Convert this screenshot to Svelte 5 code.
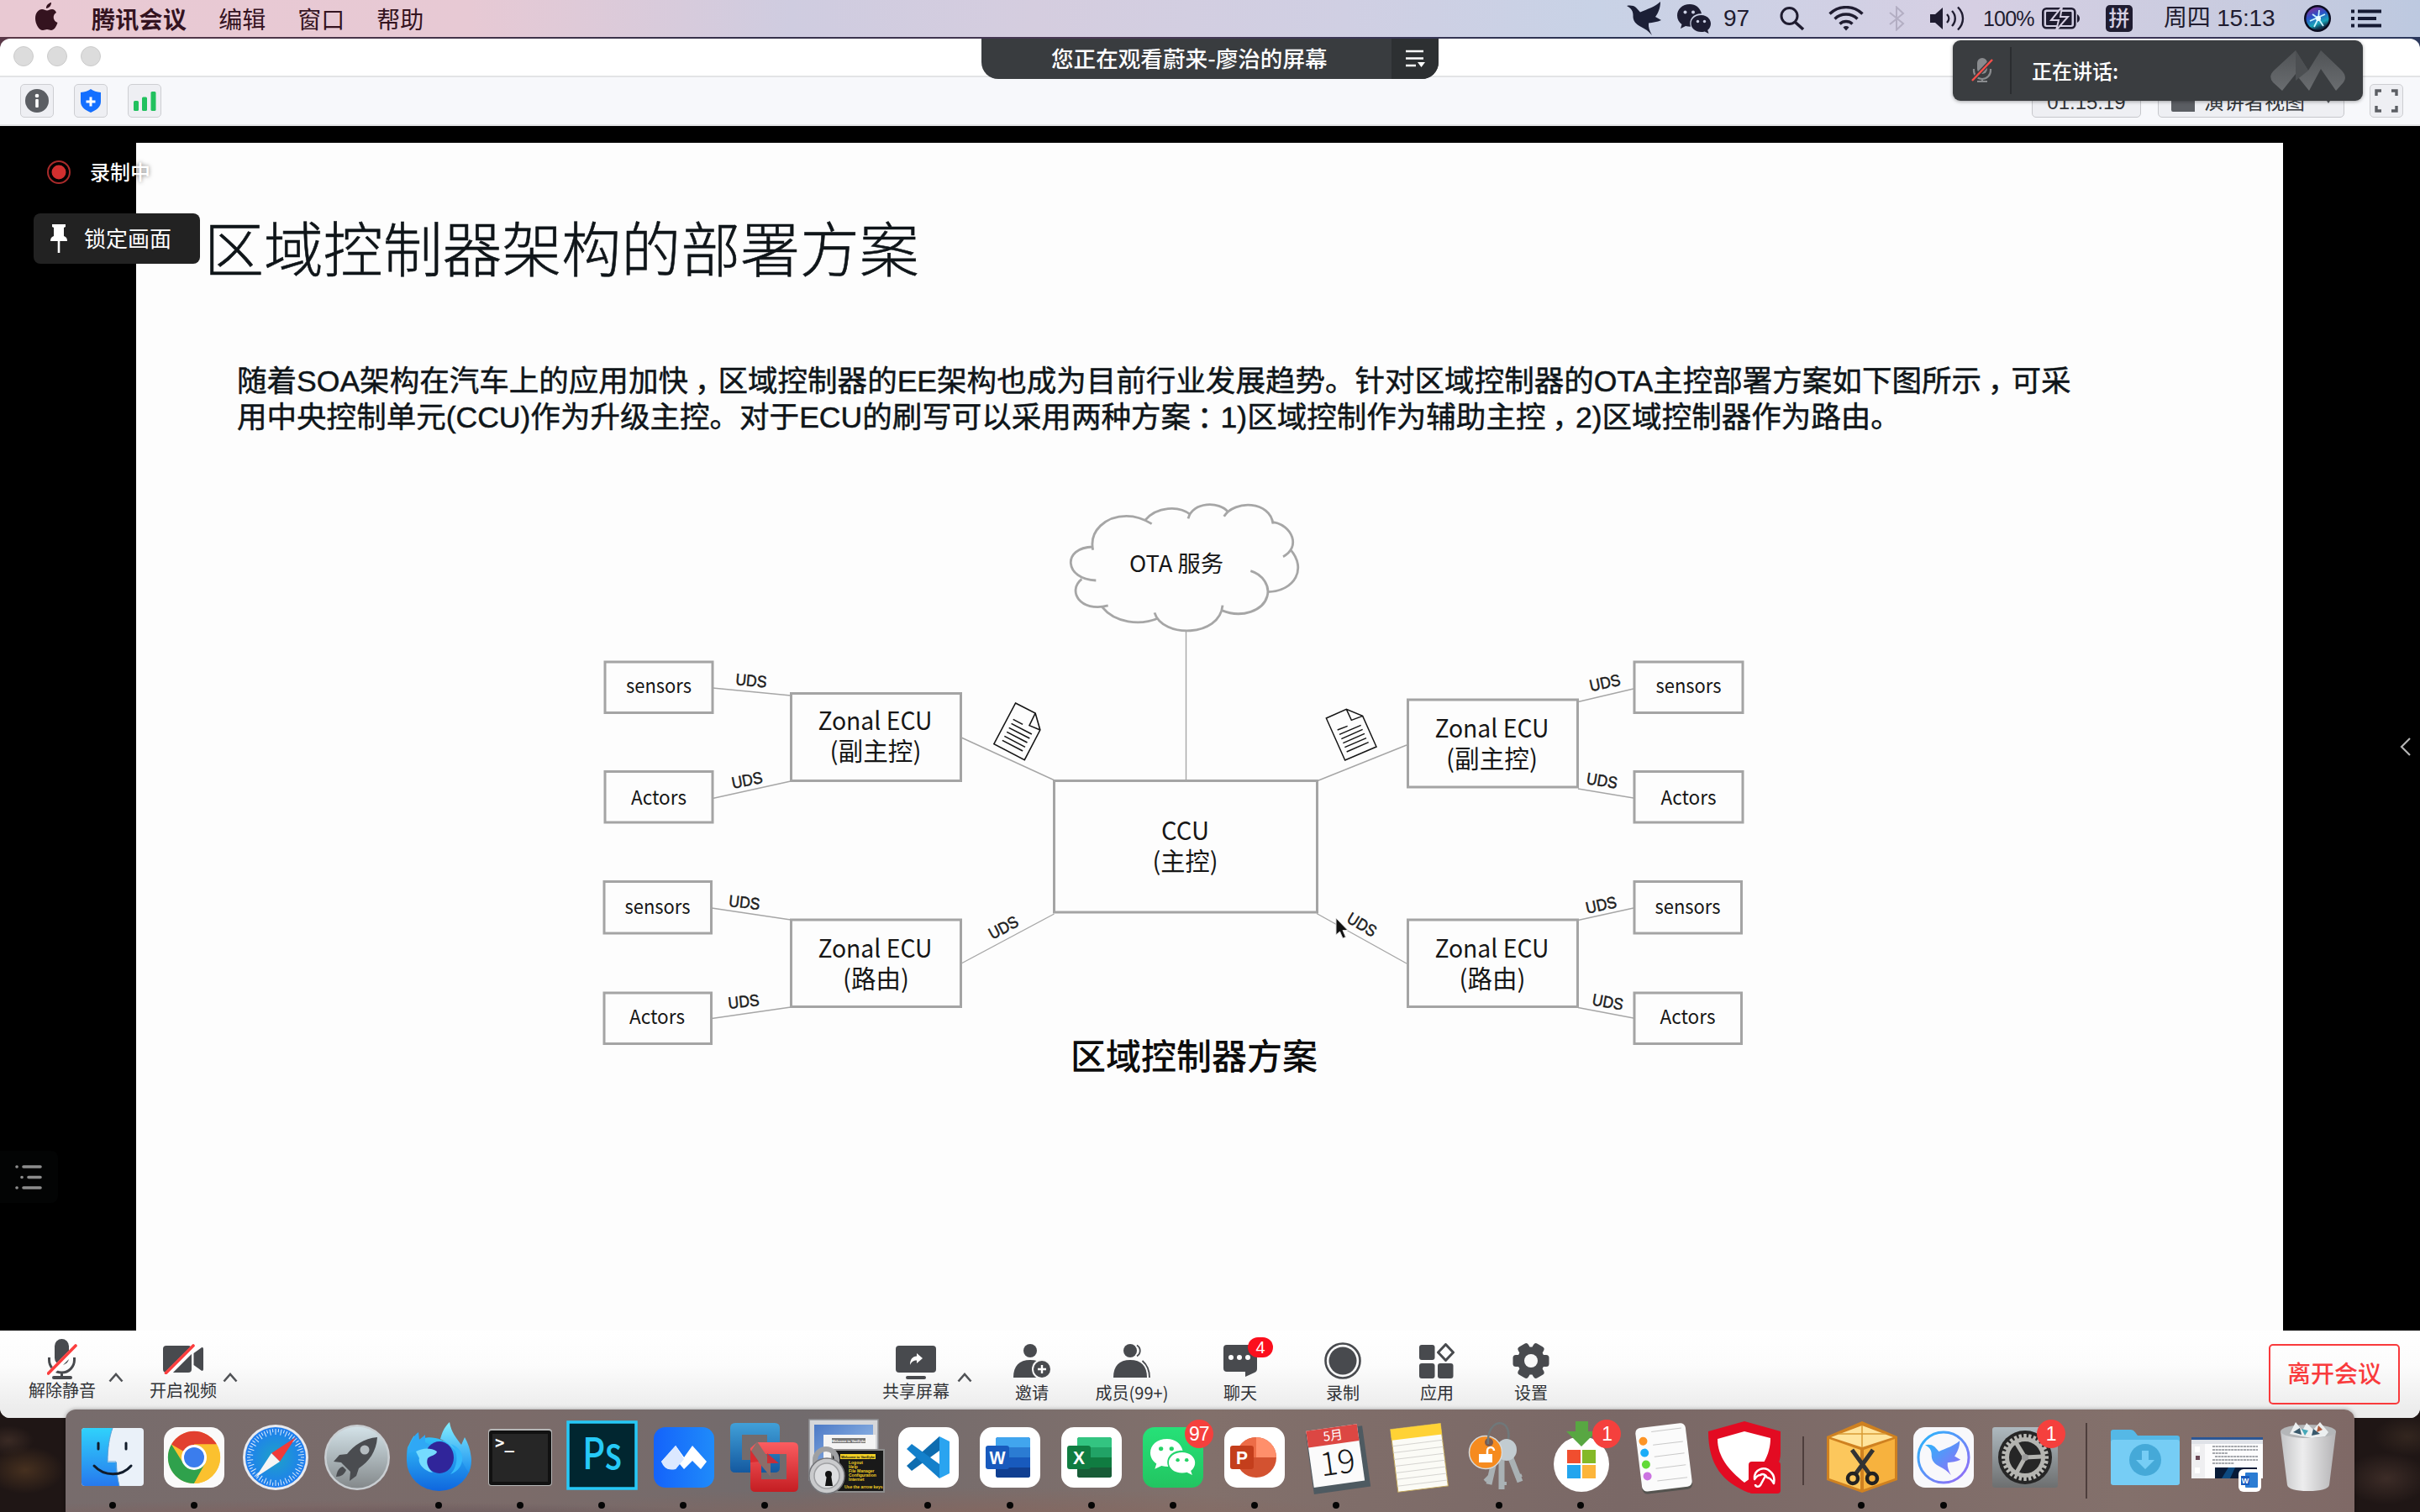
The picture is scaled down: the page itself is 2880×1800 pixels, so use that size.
<script>
  // Diagram boxes: x, y, width, height
  const boxes = [
    [1254.5, 929.5, 313, 156.5],
    [720, 788, 128, 60.5], [720, 918.5, 128, 60.5],
    [719, 1049.5, 127.5, 61.5], [719, 1182, 127.5, 60.5],
    [941.5, 825.5, 202, 104], [941.5, 1095, 202, 103.5],
    [1675.5, 833, 202, 104], [1675.5, 1095, 202, 103.5],
    [1945, 788, 129, 60.5], [1945, 918.5, 129, 60.5],
    [1945, 1049.5, 127.5, 61.5], [1945, 1182, 127.5, 60.5]
  ];

  // Connectors: x1, y1, x2, y2
  const links = [
    [1411.5, 750, 1411.5, 929],
    [848, 819, 941, 828], [848, 950.5, 941, 930],
    [847, 1081, 941, 1095], [847, 1212.5, 941, 1199],
    [1144, 878, 1254, 928.5], [1144, 1147, 1254.5, 1088],
    [1878, 835.5, 1944, 820], [1878, 939, 1944, 950],
    [1878, 1095.5, 1944, 1081], [1878, 1199.5, 1944, 1212],
    [1568, 929.5, 1674, 887], [1567, 1087.5, 1674, 1147]
  ];

  // Node labels: text, centre x, baseline, drawn width, font size
  const labels = [
    ['OTA 服务', 1400, 681, 112, 27],
    ['CCU', 1410.5, 1000, 57, 29.5], ['(主控)', 1410.5, 1036, 78, 29.5],
    ['sensors', 784, 825, 78, 23.5], ['Actors', 784, 958, 66, 23.5],
    ['sensors', 782.5, 1088, 78, 23.5], ['Actors', 782, 1219, 66, 23.5],
    ['Zonal ECU', 1041.5, 869, 136, 29.5], ['(副主控)', 1042, 905, 109, 29.5],
    ['Zonal ECU', 1041.5, 1140, 136, 29.5], ['(路由)', 1042.5, 1176, 79, 29.5],
    ['Zonal ECU', 1775.5, 878, 136, 29.5], ['(副主控)', 1775.5, 914, 109, 29.5],
    ['Zonal ECU', 1775.5, 1140, 136, 29.5], ['(路由)', 1776, 1176, 79, 29.5],
    ['sensors', 2009.5, 825, 78, 23.5], ['Actors', 2009.5, 958, 66, 23.5],
    ['sensors', 2008.5, 1088, 78, 23.5], ['Actors', 2008.5, 1219, 66, 23.5]
  ];

  // Protocol tags along the connectors: centre x, centre y, angle
  const tags = [
    [894, 810, 5], [889, 928.5, -11], [886, 1074, 6], [885, 1192, -6], [1194, 1104, -28],
    [1910, 812.5, -12], [1906.5, 929, 9], [1905.5, 1077, -12], [1913.5, 1192.5, 10], [1621, 1100.5, 31]
  ];

  const centreTools = [
    { label: '邀请', width: 130, icon: 'invite' },
    { label: '成员(99+)', width: 108, icon: 'members' },
    { label: '聊天', width: 150, icon: 'chat', badge: '4' },
    { label: '录制', width: 94, icon: 'record' },
    { label: '应用', width: 130, icon: 'apps' },
    { label: '设置', width: 94, icon: 'gear' }
  ];

  const dock = [
    { icon: 'finder', on: true }, { icon: 'chrome', on: true }, { icon: 'safari' }, { icon: 'launchpad' },
    { icon: 'firefox', on: true }, { icon: 'terminal', on: true }, { icon: 'ps', on: true },
    { icon: 'meeting', on: true }, { icon: 'vmware', on: true }, { icon: 'crt' }, { icon: 'vscode', on: true },
    { icon: 'word', on: true }, { icon: 'excel', on: true }, { icon: 'wechat', on: true, badge: '97' },
    { icon: 'ppt', on: true }, { icon: 'calendar', on: true }, { icon: 'notes' }, { icon: 'keys', on: true },
    { icon: 'windows', on: true, badge: '1' }, { icon: 'reminders' }, { icon: 'avira' },
    { icon: 'sep-short' },
    { icon: 'archive', on: true }, { icon: 'bird', on: true }, { icon: 'prefs', badge: '1' },
    { icon: 'sep-long' },
    { icon: 'folder' }, { icon: 'preview' }, { icon: 'trash' }
  ];

  const ticks = Array.from({ length: 60 }, (_, i) => i * 6);
  const teeth = Array.from({ length: 28 }, (_, i) => (i * 360) / 28);
  const lobes = [0, 60, 120, 180, 240, 300];
</script>

{#snippet wechatShape(front, back)}
  <path fill={front} fill-rule="evenodd" d="M15 0C6 0 0 6 0 13.500c0 4.500 2.200 8 5.500 10.500L4 29l6-3c2 .6 4 .8 6 .8-3-9 4-16 13-15.500C27.500 4.500 22 0 15 0z"/>
  <circle cx="9.500" cy="9.500" r="2" fill={back}/><circle cx="19" cy="9.500" r="2" fill={back}/>
  <path fill={front} d="M28.500 13C21.500 13 16.500 17.500 16.500 23s5 10 12 10c1.500 0 3-.2 4.200-.6l4.800 2.600-1.300-4.200C38.800 28.900 40 26 40 23c0-5.500-5-10-11.500-10z"/>
  <circle cx="24.500" cy="20.500" r="1.700" fill={back}/><circle cx="32.500" cy="20.500" r="1.700" fill={back}/>
{/snippet}

{#snippet birdShape(fill)}
  <path {fill} d="M0 5c4-1 8-.5 11 2l5 5.500C24 9 34 6 40 0c0 8-3 14-6 18l7 4c-5 2.500-10 2.500-15 3.500-.5 5 1 9 4 14.500-4-5-8-7.500-13-10C11 27 7 23 7.500 16 7.500 12 6 8 0 5z"/>
{/snippet}

{#snippet person(extra)}
  <circle cx="20" cy="8" r="8" fill="#484a4e"/>
  <path d="M0 40c0-14 7-21 20-21s20 7 20 21z" fill="#484a4e"/>
  {#if extra}
    <circle cx="34" cy="30" r="12" fill="#f7f7f7"/><circle cx="34" cy="30" r="10" fill="#484a4e"/>
    <path d="M34 25v10M29 30h10" stroke="#fff" stroke-width="2.400"/>
  {:else}
    <path d="M27 1c5 3 5 11 0 14M34 20c6 4 9 11 9.500 20" fill="none" stroke="#fbfbfb" stroke-width="4"/>
    <path d="M28 1.500c5 3 5 10 0 13M34.500 20c6 5 8.500 11 8.500 20" fill="none" stroke="#484a4e" stroke-width="1.800"/>
  {/if}
{/snippet}

{#snippet toolIcon(name)}
  {#if name === 'mic'}
    <svg width="36" height="48" viewBox="0 0 36 48">
      <rect x="9" y="0" width="17" height="31" rx="8.500" fill="#484a4e"/>
      <path d="M2.500 22v3a15 15 0 0 0 30 0v-3M17.500 40v5" fill="none" stroke="#484a4e" stroke-width="3"/>
      <rect x="6" y="44" width="24" height="4" rx="2" fill="#484a4e"/>
      <path d="M3 42L36 9" stroke="#fff" stroke-width="7"/><path d="M1.500 41L34 8" stroke="#fb3e3e" stroke-width="3.600" stroke-linecap="round"/>
    </svg>
  {:else if name === 'video'}
    <svg class="video" width="48" height="36" viewBox="0 0 48 36">
      <rect x="0" y="2" width="34" height="32" rx="4" fill="#484a4e"/>
      <path d="M36.500 11l9-6.500c1.500-1 2.500 0 2.500 1.500v24c0 1.500-1 2.500-2.500 1.500l-9-6.500z" fill="#484a4e"/>
      <path d="M5 36L38 3" stroke="#fff" stroke-width="7"/><path d="M3.500 34.500L36 2" stroke="#fb3e3e" stroke-width="3.600" stroke-linecap="round"/>
    </svg>
  {:else if name === 'share'}
    <svg width="48" height="40" viewBox="0 0 48 40">
      <rect width="48" height="32" rx="4" fill="#484a4e"/><rect x="12" y="36" width="24" height="4" rx="2" fill="#484a4e"/>
      <path d="M17 23c0-7 3-10 8-10.500V9l7 6-7 6v-3.500c-4 0-6 1.500-8 5.500z" fill="#fff"/>
    </svg>
  {:else if name === 'invite'}
    <svg width="44" height="40" viewBox="0 0 44 40">{@render person(true)}</svg>
  {:else if name === 'members'}
    <svg width="44" height="40" viewBox="0 0 44 40">{@render person(false)}</svg>
  {:else if name === 'chat'}
    <svg width="40" height="38" viewBox="0 0 40 38">
      <path d="M4 0h32a4 4 0 0 1 4 4v24c0 3-1 4-3 5l-11 5v-6H4a4 4 0 0 1-4-4V4a4 4 0 0 1 4-4z" fill="#484a4e"/>
      <circle cx="9" cy="15" r="3" fill="#fff"/><circle cx="19" cy="15" r="3" fill="#fff"/><circle cx="29" cy="15" r="3" fill="#fff"/>
    </svg>
  {:else if name === 'record'}
    <svg width="44" height="44" viewBox="0 0 44 44"><circle cx="22" cy="22" r="20.500" fill="none" stroke="#484a4e" stroke-width="2.600"/><circle cx="22" cy="22" r="16.500" fill="#484a4e"/></svg>
  {:else if name === 'apps'}
    <svg width="42" height="42" viewBox="0 0 42 42" fill="#484a4e">
      <rect y="2" width="18.500" height="18" rx="3"/><rect y="24" width="18.500" height="18" rx="3"/><rect x="22" y="24" width="18.500" height="18" rx="3"/>
      <path d="M31.500 1.500l9 9.500-9 9.500-9-9.500z" fill="none" stroke="#484a4e" stroke-width="3" stroke-linejoin="round"/>
    </svg>
  {:else}
    <svg width="44" height="44" viewBox="-22 -22 44 44" fill="#484a4e">
      {#each lobes as a}<rect x="-7" y="-21.500" width="14" height="20" rx="3.500" transform="rotate({a + 30})"/>{/each}
      <circle r="16.500"/><circle r="8" fill="#f8f8f8"/>
    </svg>
  {/if}
{/snippet}

{#snippet chevron()}
  <svg class="chev" width="18" height="12" viewBox="0 0 18 12"><path d="M1.500 10.500L9 2l7.500 8.500" fill="none" stroke="#505256" stroke-width="2.600"/></svg>
{/snippet}

{#snippet office(color, dark, mid, light, letter, round)}
  <rect x="-36" y="-36" width="72" height="72" rx="15" fill="#fff"/>
  {#if round}
    <circle cx="2" cy="0" r="24" fill="#d35230"/><path d="M2-24A24 24 0 0 1 26 0H2z" fill="#ff8f6b"/><path d="M2-24A24 24 0 0 0-22 0H2z" fill="#ed6c47"/>
  {:else}
    <rect x="-17" y="-24" width="41" height="48" rx="3" fill={color}/>
    <path d="M-17-12v-9a3 3 0 0 1 3-3h35a3 3 0 0 1 3 3v9z" fill={light}/><rect x="-17" y="-12" width="41" height="12" fill={mid}/>
    <path d="M-17 12h41v9a3 3 0 0 1-3 3h-35a3 3 0 0 1-3-3z" fill={dark}/>
  {/if}
  <rect x="-29" y="-14" width="28" height="28" rx="3" fill={color}/>
  <text x="-15" y="8" text-anchor="middle" class="latin" font-size="22" font-weight="700" textLength={letter === 'W' ? 19 : 14} lengthAdjust="spacingAndGlyphs" fill="#fff">{letter}</text>
{/snippet}

{#snippet dockIcon(name)}
  <svg class="app" width="96" height="96" viewBox="-48 -48 96 96">
    {#if name === 'finder'}
      <rect x="-37" y="-35" width="74" height="69" rx="4" fill="#eaf1f9"/>
      <path d="M0-35h-33a4 4 0 0 0-4 4v61a4 4 0 0 0 4 4H8C6 24 5 15 5 6H-6C-6-10-4-24 0-35z" fill="url(#g-finder)"/>
      <path d="M0-35C-4-24-6-10-6 5H4c0 12 2 21 4 29" fill="none" stroke="#5aa0d6" stroke-width="1"/>
      <path d="M-17-17v7M16-17v7M-22 10C-10 23 11 23 22 10" fill="none" stroke="#111c2b" stroke-width="3" stroke-linecap="round"/>
    {:else if name === 'chrome'}
      <rect x="-36" y="-36" width="72" height="72" rx="16" fill="#fafafa"/>
      <circle r="31" fill="#fbc12f"/>
      <path d="M0 0L-27-15.500A31 31 0 0 1 27-15.500H0z" fill="#e2402f"/><path d="M-27-15.500A31 31 0 0 0 0 31L13 7-13 7z" fill="#2fa14c"/>
      <path d="M0-15.500h27A31 31 0 0 1 0 31l13.500-23z" fill="#fbc12f"/>
      <circle r="15" fill="#fff"/><circle r="12" fill="#3b7ded"/>
    {:else if name === 'safari'}
      <circle r="39" fill="#e9eaee"/><circle r="36" fill="url(#g-safari)"/>
      {#each ticks as t}<path d="M0-34v{t % 12 ? 4 : 7}" stroke="#fff" stroke-width="1" opacity=".85" transform="rotate({t})"/>{/each}
      <path d="M24-24L5 5-5-5z" fill="#f03a3a"/><path d="M-24 24L5 5-5-5z" fill="#f5f5f5"/>
    {:else if name === 'launchpad'}
      <circle r="39" fill="#c9ced2"/><circle r="36.500" fill="url(#g-launch)"/>
      <path d="M24-24C8-23-4-14-12-4l-9 1-7 8 9 1 11 11-1 11 8-6 3-9C14 5 23-7 24-24z" fill="#4a4c50"/><circle cx="9" cy="-9" r="5.500" fill="#b5bcc0"/>
      <path d="M-17 11c-5 1-7 6-8 12 6 0 10-3 12-8" fill="#4a4c50"/>
    {:else if name === 'firefox'}
      <path d="M-37-12c3-5 4-9 8-14l2 7c9-6 20-6 30-2C10-17 39-20 39 4a38.500 36 0 0 1-77 0c0-6 0-11 1-16z" fill="url(#g-fox)"/>
      <path d="M2-22c3-11 6-15 11-20 2 12 8 19 14 27l4-9c8 14 10 29 5 42C28 8 26-4 20-8 14-14 8-20 2-22z" fill="url(#g-fox2)"/>
      <path d="M-36-5c1-10 5-20 12-25l1 9 7-6 0 9 8 4z" fill="#2fa8f5"/>
      <ellipse cx="1" cy="0" rx="17" ry="19" fill="#30259a"/><path d="M14-16c10 8 10 26 0 36 18-6 20-30 0-36z" fill="#35b8fb"/>
      <path d="M-27-7c8-4 17-5 25 0 0 4-8 5-11 8-2 5 0 12 6 17-12-2-18-12-16-17z" fill="#75dbff"/>
    {:else if name === 'terminal'}
      <rect x="-38" y="-34" width="76" height="68" rx="4" fill="#b6b6b6"/><rect x="-37" y="-32" width="74" height="65" rx="3" fill="#111"/><rect x="-33" y="-28" width="66" height="57" fill="#262626"/>
      <text x="-30" y="-11" class="mono" font-size="19" font-weight="700" fill="#fff">&gt;_</text>
    {:else if name === 'ps'}
      <rect x="-41" y="-42" width="81" height="79" fill="#012630" stroke="#26c9f7" stroke-width="3.500"/>
      <text x="-.500" y="14" text-anchor="middle" class="sans" font-size="52" textLength="47" lengthAdjust="spacingAndGlyphs" font-weight="500" fill="#26c9f7">Ps</text>
    {:else if name === 'meeting'}
      <rect x="-36" y="-36" width="72" height="72" rx="14" fill="url(#g-meet)"/>
      <path d="M-10-14l10 14-10 14C-20 16-24 12-27 5z" fill="#e1edff"/><path d="M-10-14L0 0 10-14 27 5 20 14 10 4 0 14-10 2z" fill="#fff"/><path d="M-10-14L0 2-10 14-19 14-27 5z" fill="#dbe8ff"/>
    {:else if name === 'vmware'}
      <path fill-rule="evenodd" d="M-36-41h47q6 0 6 6v47q0 6-6 6h-47q-6 0-6-6v-47q0-6 6-6zM-28-27v30H2v-30z" fill="url(#g-vmb)"/>
      <path fill-rule="evenodd" d="M-10-18h43q6 0 6 6v47q0 6-6 6h-45q-6 0-6-6v-46zM-5-4v30h30v-30z" fill="url(#g-vmr)"/>
      <path d="M-10-19L6 5v18L-18-6z" fill="#8b6d69"/><path d="M-18-9v15L-8 5zM2-5v12l14 0z" fill="#d7282d" opacity=".9"/>
    {:else if name === 'crt'}
      <rect x="-45" y="-45" width="82" height="72" fill="#d6d7da" stroke="#8f9094" stroke-width="1.500"/><rect x="-39" y="-39" width="70" height="60" fill="url(#g-crt)"/><rect x="-28" y="-27" width="62" height="46" fill="#f4f4f4"/>
      <rect x="-18" y="-23" width="40" height="6" fill="#777"/>
      <text x="2" y="-18.500" text-anchor="middle" class="latin" font-size="4" font-weight="700" fill="#fff">Welcome to VanDyke</text>
      <rect x="-18" y="-9" width="62" height="50" fill="#191919" stroke="#8c8c8c" stroke-width="2"/>
      <rect x="-8" y="-4" width="42" height="6" fill="#f1cf25"/>
      <text x="13" y=".800" text-anchor="middle" class="latin" font-size="4" font-weight="700" fill="#111">Welcome to VanDyke</text>
      <text class="latin" font-size="5" font-weight="700" fill="#f1cf25"><tspan x="2" y="8">Logout</tspan><tspan x="2" y="13">Help</tspan><tspan x="2" y="18">File Manager</tspan><tspan x="2" y="23">Configuration</tspan><tspan x="2" y="28">Internet</tspan><tspan x="-3" y="37">Use the arrow keys</tspan></text>
      <path d="M-38 12v-9a13 13 0 0 1 26 0v11" fill="none" stroke="#9fa0a2" stroke-width="6"/><circle cx="-24" cy="22" r="21" fill="#c9cacc" stroke="#75767a" stroke-width="1.500"/><circle cx="-24" cy="22" r="15" fill="#dcdddf" stroke="#9fa0a3" stroke-width="1.500"/><circle cx="-22" cy="20" r="4" fill="#111"/><path d="M-24 21h5l2 13h-9z" fill="#111"/>
    {:else if name === 'vscode'}
      <rect x="-36" y="-36" width="72" height="72" rx="15" fill="#fff"/>
      <path d="M13-25l-39 35 6 6L13-8z" fill="#0d6cb0"/><path d="M13 25l-39-35 6-6L13 8z" fill="#1380cb"/><path d="M13-25l12 6v38l-12 6z" fill="#2aa4f0"/>
    {:else if name === 'word'}
      {@render office('#185abd', '#103f91', '#2b7cd3', '#41a5ee', 'W', false)}
    {:else if name === 'excel'}
      {@render office('#107c41', '#185c37', '#21a366', '#33c481', 'X', false)}
    {:else if name === 'ppt'}
      {@render office('#c43e1c', '', '', '', 'P', true)}
    {:else if name === 'wechat'}
      <rect x="-36" y="-36" width="72" height="72" rx="14" fill="url(#g-we)"/>
      <g transform="translate(-27 -22) scale(1.330 1.230)">{@render wechatShape('#fff', '#25d366')}</g>
    {:else if name === 'calendar'}
      <g transform="rotate(-8)"><rect x="-32" y="-33" width="68" height="73" fill="#4e5a61"/><rect x="-31" y="-36" width="61" height="68" fill="#fbfbfb"/><rect x="-31" y="-36" width="61" height="20" fill="#dc4743"/>
        <text x="0" y="-21" text-anchor="middle" class="sans" font-size="15" fill="#fff">5月</text><text x="1" y="20" text-anchor="middle" class="sans" font-size="39" font-weight="300" fill="#161616">19</text></g>
    {:else if name === 'notes'}
      <g transform="rotate(-7)"><rect x="-29" y="-37" width="60" height="75" fill="#fbfbf6" stroke="#c2a656" stroke-width="1"/><rect x="-29" y="-37" width="60" height="13" fill="#ffd235"/><path d="M-29-17h60M-29-9h60M-29-1h60M-29 7h60M-29 15h60M-29 23h60M-29 31h60" stroke="#d5d4d0" stroke-width="1"/></g>
    {:else if name === 'keys'}
      <g transform="translate(-4 0)">
        <path d="M0-8l-9 40M6-10v48M12-12l16 41" fill="none" stroke="#a9b1b4" stroke-width="7"/>
        <path d="M-8 22l-6 6M5 31h7M23 24l7-3" stroke="#a9b1b4" stroke-width="4"/><ellipse cx="12" cy="-9" rx="12" ry="13" fill="#c2ccd1"/>
        <circle cx="-13" cy="-6" r="19.500" fill="#f68b1f" stroke="#d6dadb" stroke-width="1.500"/><circle cx="-9" cy="-18" r="5" fill="#7b5a50"/><rect x="-21" y="-4" width="16" height="10" fill="#fff"/><path d="M-11-4v-4a4 4 0 0 1 8 0" fill="none" stroke="#fff" stroke-width="2.500"/>
        <path d="M-10-16c-2-32 28-32 24-6" fill="none" stroke="#70787a" stroke-width="2.500"/>
      </g>
    {:else if name === 'windows'}
      <circle cy="8" r="33" fill="#fff"/>
      <rect x="-17" y="-9" width="16" height="16" fill="#f04e2f"/><rect x="1" y="-9" width="16" height="16" fill="#84b927"/><rect x="-17" y="9" width="16" height="16" fill="#23a5ee"/><rect x="1" y="9" width="16" height="16" fill="#fcb53b"/>
      <path d="M-7-43H8v12h10L0-13-18-31h11z" fill="#58a742"/>
    {:else if name === 'reminders'}
      <g transform="rotate(-7)"><rect x="-29" y="-35" width="60" height="76" rx="6" fill="#54534f"/><rect x="-29" y="-38" width="60" height="76" rx="6" fill="#fbfbfb"/>
        <circle cx="-21" cy="-22" r="5" fill="#fd9426"/><circle cx="-21" cy="-8" r="5" fill="#1badf8"/><circle cx="-21" cy="6" r="5" fill="#63da38"/><circle cx="-21" cy="20" r="5" fill="#cc73e1"/>
        <path d="M-10-32h36M-10-16h36M-10-2h36M-10 12h36M-10 27h36" stroke="#c9c9c9" stroke-width="1"/></g>
    {:else if name === 'avira'}
      <path d="M0-43l43 12v26c0 20-20 36-38 47C-25 30-43 10-43-31z" fill="#e30b22"/><path d="M0-31l31 8c0 20-10 38-31 53C-19 15-32-1-32-22z" fill="#fff"/>
      <rect x="5" y="5" width="38" height="38" rx="4" fill="#e30b22"/>
      <path d="M12 26c-1-12 12-17 20-8 3 3 4 8 3 13-3-5-5-7-8-7-2-4-6-5-8-3-3 0-5 2-7 5z" fill="none" stroke="#fff" stroke-width="2.500" stroke-linejoin="round"/><path d="M25 22l-6 11c-2 3-6 2-6-1" fill="none" stroke="#fff" stroke-width="2.500"/>
    {:else if name === 'archive'}
      <path d="M0-43l42 18v52L0 42-42 27v-52z" fill="#cf8120"/><path d="M0-38l37 14L0-12-37-24z" fill="#ffe49c"/><path d="M-39-22L-2-9v47L-39 25z" fill="#fcc75c"/><path d="M39-22L2-9v47L39 25z" fill="#f7b23e"/>
      <path d="M-28-28h56M0-38v26" stroke="#d99b35" stroke-width="1.500"/><path d="M-12-9L9 20M13-9L-8 20" stroke="#333" stroke-width="5"/><circle cx="-11" cy="25" r="6" fill="none" stroke="#222" stroke-width="4.500"/><circle cx="12" cy="25" r="6" fill="none" stroke="#222" stroke-width="4.500"/>
    {:else if name === 'bird'}
      <rect x="-36" y="-36" width="72" height="72" rx="14" fill="#f8f8fb"/><circle r="30" fill="none" stroke="url(#g-bird)" stroke-width="3"/>
      <g transform="translate(-22 -20) scale(1.030)">{@render birdShape('url(#g-bird)')}</g>
    {:else if name === 'prefs'}
      <rect x="-39" y="-36" width="78" height="72" rx="3" fill="url(#g-pref)"/><circle r="32" fill="#262626"/>
      {#each teeth as t}<rect x="-1.700" y="-28" width="3.400" height="6" fill="#b9b9b5" transform="rotate({t})"/>{/each}
      <circle r="21.500" fill="none" stroke="#b4b4b0" stroke-width="5"/><path d="M0 0l20-1M0 0l-11-18M0 0l-10 18" stroke="#b4b4b0" stroke-width="5"/><circle r="4" fill="#999"/>
    {:else if name === 'folder'}
      <path d="M-41-30q0-3 3-3h21q3 0 5 3l3 4h47q3 0 3 3v52q0 3-3 3h-76q-3 0-3-3z" fill="#55b8e6"/><rect x="-41" y="-21" width="82" height="54" rx="3" fill="#76cdf5"/>
      <circle cy="3" r="19" fill="#45a9d8"/><path d="M-4-8h8V3h7L0 14-11 3h7z" fill="#76cdf5"/>
    {:else if name === 'preview'}
      <rect x="-42" y="-24" width="85" height="49" fill="#fcfcfd"/><rect x="-42" y="-24" width="85" height="3" fill="#2c5795"/><rect x="-42" y="-21" width="85" height="5" fill="#dfe2e8"/><rect x="-42" y="-16" width="16" height="41" fill="#efeff1"/>
      <path d="M-38-13h6v7h-6zM-38 12h6v7h-6z" fill="#fff"/><path d="M-37-2h5v5h-5z" fill="#6d4a58"/>
      <path d="M-17-13H37M-17-9H37M-17-5h18M-14-1H37M-17 3H37M-17 7h26" stroke="#868a91" stroke-width="1.400" stroke-dasharray="3 .7"/><rect x="-14" y="12" width="50" height="13" fill="#071b38"/><path d="M-6 25l8-13h8l-6 13z" fill="#0d4a80"/>
      <rect x="14" y="14" width="27" height="27" rx="6" fill="#fff"/><rect x="22" y="18" width="15" height="18" rx="1" fill="#2b7cd3"/><rect x="17" y="22" width="10" height="11" fill="#185abd"/><text x="22" y="31" text-anchor="middle" class="latin" font-size="9" font-weight="700" fill="#fff">W</text>
    {:else if name === 'trash'}
      <path d="M-33-31L-25 33q2 7 25 7t25-7l8-64z" fill="url(#g-trash)"/><ellipse cy="-31" rx="33" ry="8" fill="#b4b6b8"/>
      <path d="M-22-28l7-14 8 10 5-9 8 8 8-9 10 12-4 5-16 2z" fill="#eceff0"/><path d="M-18-30l8-5 2 8zM6-34l8 6-10 2z" fill="#39596c"/><path d="M-8-34l8 2-4 6z" fill="#46a8b8"/><path d="M12-38l5 5-7 3z" fill="#b05a3c"/>
    {/if}
  </svg>
{/snippet}

<svg class="defs" width="0" height="0">
  <defs>
    <linearGradient id="g-finder" x2="0" y2="1"><stop stop-color="#30d2fb"/><stop offset="1" stop-color="#2679ee"/></linearGradient>
    <radialGradient id="g-safari"><stop stop-color="#1ea2c8"/><stop offset="1" stop-color="#1f7df0"/></radialGradient>
    <linearGradient id="g-launch" x2="0" y2="1"><stop stop-color="#d3e2e8"/><stop offset="1" stop-color="#84898b"/></linearGradient>
    <linearGradient id="g-fox" x2="0" y2="1"><stop stop-color="#35c4fa"/><stop offset="1" stop-color="#0f66de"/></linearGradient>
    <linearGradient id="g-fox2" x2="0" y2="1"><stop stop-color="#84efff"/><stop offset="1" stop-color="#1c8fee"/></linearGradient>
    <linearGradient id="g-meet" x2="1" y2="0"><stop stop-color="#1463fb"/><stop offset="1" stop-color="#1f8bfa"/></linearGradient>
    <linearGradient id="g-vmb" x2="0" y2="1"><stop stop-color="#41a0d8"/><stop offset="1" stop-color="#1459a0"/></linearGradient>
    <linearGradient id="g-vmr" x2="0" y2="1"><stop stop-color="#fb5d60"/><stop offset="1" stop-color="#c41d22"/></linearGradient>
    <linearGradient id="g-crt" x2="1" y2="1"><stop stop-color="#4c79c6"/><stop offset="1" stop-color="#a8cbf1"/></linearGradient>
    <linearGradient id="g-we" x2="0" y2="1"><stop stop-color="#26e178"/><stop offset="1" stop-color="#22c561"/></linearGradient>
    <linearGradient id="g-bird" x2="1" y2="1"><stop stop-color="#25b8fb"/><stop offset="1" stop-color="#9a68f6"/></linearGradient>
    <linearGradient id="g-pref" x2="0" y2="1"><stop stop-color="#aeb9bf"/><stop offset="1" stop-color="#6d6f70"/></linearGradient>
    <linearGradient id="g-trash" x2="1" y2="0"><stop stop-color="#c3c4c6"/><stop offset=".4" stop-color="#ededee"/><stop offset="1" stop-color="#b4b3b5"/></linearGradient>
    <linearGradient id="g-siri" x2=".4" y2="1"><stop stop-color="#9a2b86"/><stop offset=".45" stop-color="#2a50c8"/><stop offset=".8" stop-color="#18a4b8"/><stop offset="1" stop-color="#10324c"/></linearGradient>
    <linearGradient id="g-logo" x2="0" y2="1"><stop stop-color="#505356"/><stop offset="1" stop-color="#6a6d70"/></linearGradient>
  </defs>
</svg>

<div class="screen">
  <header class="menubar">
    <svg class="apple" width="28" height="34" viewBox="0 0 28 34" fill="#34131f"><path d="M19 0c.3 3-2.500 7-6 7-.4-3 2.500-6.500 6-7zM25 12c-5 3-4 10 1.500 12C25 29 22 33 19 33c-2 0-3-1-5-1s-3 1-5 1C4 33 0 25 0 19 0 12 4 8 8 8c2.500 0 4 1.500 6 1.500S17 8 20 8c2 0 4 1.500 5 4z"/></svg>
    <nav><b>腾讯会议</b><span>编辑</span><span>窗口</span><span>帮助</span></nav>
    <div class="status">
      <svg width="42" height="40" viewBox="0 0 42 40">{@render birdShape('#1b1f36')}</svg>
      <svg width="40" height="35" viewBox="0 0 40 35">{@render wechatShape('#1d1d33', '#ccd0e4')}</svg>
      <span>97</span>
      <svg width="30" height="30" viewBox="0 0 30 30" fill="none" stroke="#1f1c30" stroke-width="3"><circle cx="11.500" cy="12" r="9.500"/><path d="M18 19l10 9" stroke-width="3.600"/></svg>
      <svg width="42" height="30" viewBox="0 0 42 30" fill="none" stroke="#1f1c30" stroke-width="3.400"><path d="M1.500 9.500a28 28 0 0 1 39 0M7.500 15.500a19.500 19.500 0 0 1 27 0M13.500 21.500a11 11 0 0 1 15 0"/><path d="M17.500 25.500a5 5 0 0 1 7 0L21 29.500z" fill="#1f1c30" stroke="none"/></svg>
      <svg width="20" height="30" viewBox="0 0 20 30" fill="none" stroke="#b3aec3" stroke-width="2"><path d="M1 8l16 13-8 7.500v-27L17 9 1 22"/></svg>
      <svg width="44" height="32" viewBox="0 0 44 32" fill="none" stroke="#1f1c30" stroke-width="2.400"><path d="M0 11h6l9-8v26l-9-8H0z" fill="#1f1c30" stroke="none"/><path d="M20 11c3 3 3 7 0 10M26 7c5 5 5 13 0 18M33 2.500c8 8 8 19 0 27"/></svg>
      <span class="pct">100%</span>
      <svg width="46" height="26" viewBox="0 0 46 26"><rect x="1.300" y="1.300" width="38" height="23" rx="4" fill="none" stroke="#1f1c30" stroke-width="2.600"/><rect x="5" y="5" width="30.500" height="16" rx="1" fill="#1f1c30"/><path d="M42 8c4 2 4 8 0 10z" fill="#1f1c30"/><path d="M24-1L11 15h9l-3 12L31 11h-9z" fill="#1f1c30" stroke="#d6cfe2" stroke-width="2"/></svg>
      <span class="ime">拼</span>
      <span class="clock">周四 15:13</span>
      <svg width="32" height="32" viewBox="0 0 32 32"><circle cx="16" cy="16" r="16" fill="#0b0c20"/><circle cx="16" cy="16" r="13.500" fill="url(#g-siri)"/><path d="M7 19l9-4 9-4M12 26l5-10 1-10M10 11l7 5 6 9" fill="none" stroke="#c9f4ff" stroke-width="1.800"/><circle cx="17" cy="16" r="3" fill="#eafcff"/></svg>
      <svg width="36" height="22" viewBox="0 0 36 22" stroke="#151a33" stroke-width="4"><path d="M0 2.500h4M8 2.500h28M0 11h4M8 11h22M0 19.500h4M8 19.500h28"/></svg>
    </div>
  </header>

  <main class="window">
    <div class="titlebar"><i></i><i></i><i></i></div>
    <div class="toolbar">
      <span class="sq"><svg width="28" height="28" viewBox="0 0 28 28"><circle cx="14" cy="14" r="14" fill="#5b5e63"/><circle cx="14" cy="8" r="2.300" fill="#fff"/><rect x="12.200" y="12" width="3.600" height="10" rx="1" fill="#fff"/></svg></span>
      <span class="sq"><svg width="24" height="28" viewBox="0 0 24 28"><path d="M12 0c3 2.500 7 3.500 12 4v11c0 6-5 10-12 13C5 25 0 21 0 15V4c5-.5 9-1.500 12-4z" fill="#146fff"/><path d="M12 9.500v11M6.500 15h11" stroke="#fff" stroke-width="3"/></svg></span>
      <span class="sq"><svg width="27" height="23" viewBox="0 0 27 23" fill="#21c15e"><rect y="11" width="6" height="12" rx="1.500"/><rect x="10" y="6.500" width="6" height="16.500" rx="1.500"/><rect x="20.500" width="6" height="23" rx="1.500"/></svg></span>
      <div class="right">
        <span class="box timer">01:15:19</span>
        <span class="box view"><svg width="28" height="26" viewBox="0 0 28 26"><path d="M0 0h12v12h16v14H2a2 2 0 0 1-2-2z" fill="#5b5e63"/></svg>演讲者视图<svg width="12" height="9" viewBox="0 0 12 9"><path d="M0 0h12L6 9z" fill="#5b5e63"/></svg></span>
        <span class="sq full"><svg width="28" height="28" viewBox="0 0 28 28"><path d="M8 2H2v6M20 2h6v6M8 26H2v-6M20 26h6v-6" fill="none" stroke="#5b5e63" stroke-width="3.400"/></svg></span>
      </div>
    </div>

    <section class="stage">
      <article class="slide">
        <h1>区域控制器架构的部署方案</h1>
        <p>
          随着SOA架构在汽车上的应用加快<i>，</i>区域控制器的EE架构也成为目前行业发展趋势。针对区域控制器的OTA主控部署方案如下图所示<i>，</i>可采<br />用中央控制单元(CCU)作为升级主控。对于ECU的刷写可以采用两种方案<i>：</i>1)区域控制作为辅助主控<i>，</i>2)区域控制器作为路由。
        </p>
        <svg class="diagram" width="2555" height="1414" viewBox="162 170 2555 1414">
          {#each links as [x1, y1, x2, y2]}<line {x1} {y1} {x2} {y2} stroke="#a6a6a6" stroke-width="1.400"/>{/each}
          {#each boxes as [x, y, width, height]}<rect {x} {y} {width} {height} fill="#fdfdfd" stroke="#a4a4a4" stroke-width="3"/>{/each}
          <g transform="translate(1220 580) scale(.33333)" fill="none" stroke="#a6a6a6" stroke-width="8.500">
            <path d="M242 224C228 155 288 103 362 103C400 103 430 117 452 131M428 118C470 68 550 65 590 98M582 112C598 50 695 50 724 88M710 104C748 45 875 48 885 131M883 124C955 135 985 215 921 248M948 224C1005 290 965 370 868 374M805 299C850 312 875 355 864 390C850 440 775 470 702 440M705 422C695 536 490 540 462 448M475 468C410 495 320 485 275 428M296 423C195 448 150 370 202 328M253 333C140 330 130 215 242 213"/>
            <path d="M1075 825L1147 793L1205 817L1254 927L1142 975zM1147 793L1165 832L1205 817M1115 867L1151 853M1122 883L1199 850M1129 899L1205 865M1135 914L1212 880M1141 929L1218 896M1148 945L1226 911" stroke="#151515" stroke-width="4.500"/>
          </g>
          <g transform="translate(700 760) scale(.35714 .33333)" fill="none" stroke="#151515" stroke-width="4.500">
            <path d="M1424 231L1490 267L1506 327L1454 434L1352 377zM1490 267L1470 311L1506 327M1416 289L1448 307M1410 304L1478 342M1402 319L1471 357M1395 334L1463 372M1387 349L1456 388M1380 364L1448 402"/>
          </g>
          {#each labels as [text, x, y, w, size]}<text {x} {y} text-anchor="middle" class="sans" font-size={size} textLength={w} lengthAdjust="spacingAndGlyphs" fill="#161616">{text}</text>{/each}
          {#each tags as [x, y, a]}<text text-anchor="middle" class="latin" font-size="19.500" y="7" textLength="37" lengthAdjust="spacingAndGlyphs" fill="#1c1c1c" stroke="#1c1c1c" stroke-width=".5" transform="translate({x} {y}) rotate({a})">UDS</text>{/each}
          <path d="M1590 1093v20l4.500-4 3.500 8 3.500-1.500-3.500-8h6z" fill="#111" stroke="#ddd" stroke-width="1"/>
          <text x="1421" y="1273" text-anchor="middle" class="sans" font-size="42" font-weight="500" fill="#0c0c0c">区域控制器方案</text>
        </svg>
      </article>
      <div class="recording"><svg width="28" height="28" viewBox="0 0 28 28"><circle cx="14" cy="14" r="13" fill="none" stroke="#a82a2a" stroke-width="2"/><circle cx="14" cy="14" r="8.500" fill="#d22f2f"/></svg><span>录制中</span></div>
      <div class="lock"><svg width="20" height="34" viewBox="0 0 20 34" fill="#fff"><path d="M2 0h16v3l-2 1v10c3 1 4 3 4 6H0c0-3 1-5 4-6V4L2 3z"/><rect x="8.700" y="19" width="2.600" height="15"/></svg><span>锁定画面</span></div>
      <div class="outline"><svg width="32" height="29" viewBox="0 0 32 29" stroke="#8d8d8d" stroke-width="3.600" stroke-linecap="round"><path d="M2 2h.1M10 2h20M8 14.500h.1M16 14.500h14M2 27h.1M10 27h20"/></svg></div>
      <svg class="expand" width="14" height="22" viewBox="0 0 14 22"><path d="M12 1L2 11l10 10" fill="none" stroke="#b4b4b4" stroke-width="2.200"/></svg>
    </section>

    <footer class="controls">
      <div class="tool wide">{@render toolIcon('mic')}<span>解除静音</span></div>
      {@render chevron()}
      <div class="tool second">{@render toolIcon('video')}<span>开启视频</span></div>
      {@render chevron()}
      <div class="tool share">{@render toolIcon('share')}<span>共享屏幕</span></div>
      {@render chevron()}
      <div class="centre">
        {#each centreTools as t}
          <div class="tool low" style:width="{t.width}px">
            <div class="glyph">{@render toolIcon(t.icon)}{#if t.badge}<em>{t.badge}</em>{/if}</div><span>{t.label}</span>
          </div>
        {/each}
      </div>
      <button>离开会议</button>
    </footer>
  </main>

  <aside class="sharing"><span>您正在观看蔚来-廖治的屏幕</span><b><svg width="24" height="22" viewBox="0 0 24 22"><path d="M0 2h21M0 10.500h21M0 19h12" stroke="#fff" stroke-width="2.400"/><path d="M14 15h9l-4.500 6z" fill="#fff"/></svg></b></aside>

  <aside class="speaking">
    <div class="muted"><svg width="26" height="30" viewBox="0 0 26 30"><rect x="7" y="0" width="12" height="19" rx="6" fill="#898b8e"/><path d="M3 13v2a10 10 0 0 0 20 0v-2M13 25v3M7 28h12" fill="none" stroke="#898b8e" stroke-width="2.200"/><path d="M1 27L25 2" stroke="#3a3d40" stroke-width="5"/><path d="M1 27L25 2" stroke="#fa4f4a" stroke-width="2.400"/></svg></div>
    <span>正在讲话:</span>
    <svg width="90" height="48" viewBox="0 0 90 48"><path d="M30 0L45 24 60 0 84 23Q92 31 87 38L78 48 60 22 46 48 30 28 14 48 3 38Q-3 31 4 24z" fill="url(#g-logo)"/><path d="M30 0l15 24L30 36z" fill="#4c4f52"/></svg>
  </aside>

  <footer class="dock">
    {#each dock as d}
      {#if d.icon === 'sep-short' || d.icon === 'sep-long'}
        <div class="sep" class:long={d.icon === 'sep-long'}></div>
      {:else}
        <div class="cell">
          {@render dockIcon(d.icon)}
          {#if d.badge}<em>{d.badge}</em>{/if}
          {#if d.on}<i></i>{/if}
        </div>
      {/if}
    {/each}
  </footer>
</div>

<style>
  :global(body) { overflow: hidden; background: #241a18; }
  .screen { position: relative; width: 2880px; height: 1800px; overflow: hidden; box-sizing: border-box; font-family: "Noto Sans CJK SC", sans-serif; background: radial-gradient(ellipse at 30px 1750px, #46301f, transparent 46px), radial-gradient(ellipse at 10px 1715px, #3a2a24, transparent 30px), radial-gradient(ellipse at 2840px 1760px, #3c2c27, transparent 50px), radial-gradient(ellipse at 2865px 1710px, #33261f, transparent 40px), linear-gradient(90deg, #5a3848 0, #33304a 900px, #4a3854 1300px, #2b3353 1900px, #3d3355 2500px, #2b385c) 0 0 / 100% 80px no-repeat, #1f1615; }
  .screen *, .screen *::before { box-sizing: border-box; }
  .defs { position: absolute; }
  svg { display: block; flex: none; }
  .sans { font-family: "Noto Sans CJK SC", sans-serif; }
  .latin { font-family: "Liberation Sans", sans-serif; }
  .mono { font-family: "DejaVu Sans Mono", monospace; }

  .menubar { display: flex; align-items: center; height: 44px; padding: 0 46px 0 42px; font-size: 28px; color: #34131f; background: linear-gradient(90deg, #e9c9d3 0, #e7c9d4 560px, #cfcce0 940px, #d5cddf 1230px, #d0cfe3 1600px, #c8d2e6 1900px, #d6cfe3 2350px, #c7cbdf 2700px, #bdc9e0); }
  .apple { margin-top: -4px; }
  nav { display: flex; gap: 38px; margin-left: 39px; line-height: 44px; }
  nav b { letter-spacing: .3px; }
  .status { display: grid; align-items: center; margin-left: auto; grid-template-columns: 60px 55px 67px 58px 72px 49px 63px 70px 76px 69px 167px 56px 36px; line-height: 44px; color: #1f1c30; font-family: "Liberation Sans", "Noto Sans CJK SC", sans-serif; }
  .status .pct { font-size: 25px; letter-spacing: -.8px; }
  .ime { display: grid; place-items: center; width: 32px; height: 32px; border-radius: 5px; background: #1f1c30; color: #d5cfe2; font-size: 25px; line-height: 30px; font-weight: 500; }
  .clock { white-space: nowrap; letter-spacing: -.2px; }

  .window { display: flex; flex-direction: column; height: 1642px; margin-top: 2px; border-radius: 12px; overflow: hidden; background: #fff; }
  .titlebar { display: flex; gap: 16px; align-items: center; height: 46px; padding: 0 0 2px 16px; border-bottom: 2px solid #e3e4e6; }
  .titlebar i { width: 24px; height: 24px; border: 1px solid #cbcbcb; border-radius: 50%; background: #dcdcdc; }
  .toolbar { display: flex; gap: 24px; align-items: center; height: 58px; padding: 0 20px 0 24px; border-bottom: 2px solid #e3e4e6; background: #f7f8fb; }
  .sq { display: grid; place-items: center; width: 40px; height: 40px; border: 1.500px solid #cdced2; border-radius: 5px; background: #eeeff3; }
  .right { display: flex; margin-left: auto; color: #33363a; font-size: 24px; }
  .box { display: flex; align-items: center; height: 40px; border: 1.500px solid #c6c7cb; border-radius: 5px; background: #eeeff3; white-space: nowrap; }
  .timer { justify-content: center; width: 130px; padding-top: 3px; font: 24px "Liberation Sans", sans-serif; }
  .view { width: 222px; margin-left: 20px; padding: 0 12px 0 15px; gap: 11px; line-height: 36px; }
  .view svg:last-child { margin: 0 0 4px auto; }
  .full { margin-left: 30px; }

  .stage { position: relative; height: 1434px; padding: 20px 163px 0 162px; background: #000; }
  .slide { position: relative; height: 1414px; padding: 70px 0 0 81px; background: #fdfdfd; color: #0f1519; }
  h1 { margin: 0; font-size: 70.900px; line-height: 104px; font-weight: 300; white-space: nowrap; -webkit-text-stroke: .6px #0f1519; }
  p { margin: 89px 0 0 39px; font: 35.540px/43px "Liberation Sans", "Noto Sans CJK SC", sans-serif; white-space: nowrap; -webkit-text-stroke: .5px #0f1519; }
  p i { display: inline-block; width: 1em; padding-left: .22em; font-feature-settings: "halt"; font-style: normal; }
  .diagram { position: absolute; inset: 0; }
  .recording { position: absolute; left: 56px; top: 36px; display: flex; align-items: center; gap: 24px; color: #fff; font-size: 24px; font-weight: 500; line-height: 36px; text-shadow: 0 0 5px rgba(0, 0, 0, .55); }
  .recording span, .lock span { padding-bottom: 2px; }
  .recording span { margin-left: -1px; }
  .lock { position: absolute; left: 40px; top: 104px; display: flex; align-items: center; gap: 20px; width: 198px; height: 60px; padding-left: 20px; border-radius: 8px; background: #222; color: #fff; font-size: 26px; }
  .lock span { padding-bottom: 4px; }
  .outline { position: absolute; left: 0; top: 1220px; display: flex; align-items: center; width: 69px; height: 62px; padding-left: 18px; border-radius: 0 8px 8px 0; background: #030404; }
  .expand { position: absolute; right: 10px; top: 728px; }

  .controls { display: flex; align-items: flex-start; height: 104px; padding: 0 24px 0 22px; background: linear-gradient(#fff 0, #fcfcfc 40%, #ececec 94px); color: #303236; font-size: 20px; }
  .tool { display: flex; flex-direction: column; align-items: center; height: 83px; padding-top: 10px; }
  .tool > span { margin-top: auto; line-height: 24px; white-space: nowrap; }
  .tool.low { height: 86px; }
  .wide { width: 104px; }
  .second { width: 88px; margin-left: 24px; padding-top: 16px; }
  .share { width: 88px; margin-left: 760px; height: 84px; padding-top: 18px; }
  .chev { margin: 50px 3px 0; }
  .share + .chev { margin: 50px 5px 0; }
  .centre { display: flex; margin-left: 1px; }
  .glyph { position: relative; display: grid; place-items: center; height: 50px; padding-top: 2px; }
  .glyph em { position: absolute; left: 29px; top: -2px; width: 30px; height: 24px; border-radius: 12px; background: #fb0f1d; color: #fff; font: 20px/24px "Liberation Sans", sans-serif; text-align: center; }
  button { width: 156px; height: 72px; margin: 16px 0 0 auto; padding: 0 0 5px; border: 2px solid #f93a3c; border-radius: 5px; background: transparent; color: #f93a3c; font: 500 28px "Noto Sans CJK SC", sans-serif; white-space: nowrap; }

  .sharing { position: absolute; left: 1168px; top: 46px; display: flex; width: 544px; height: 48px; border-radius: 0 0 20px 20px; overflow: hidden; background: #393c3f; color: #fff; font-size: 26.600px; font-weight: 500; line-height: 46px; }
  .sharing span { width: 488px; padding-left: 83px; white-space: nowrap; }
  .sharing b { display: grid; place-items: center; flex: 1; padding-left: 1px; background: #2d3032; }
  .speaking { position: absolute; left: 2324px; top: 48px; display: flex; align-items: center; width: 488px; height: 72px; padding-right: 20px; border-radius: 9px; background: #3a3d40; color: #fff; font-size: 24px; font-weight: 500; box-shadow: 0 1px 4px rgba(0, 0, 0, .35); }
  .muted { display: grid; place-items: center; width: 70px; height: 56px; padding-left: 1px; border-right: 2px solid #2b2d30; }
  .speaking span { margin: 0 auto 1px 24px; }

  .dock { position: absolute; left: 78px; top: 1678px; display: flex; width: 2724px; height: 134px; padding-left: 7.500px; border-radius: 12px; box-shadow: 0 0 5px rgba(0, 0, 0, .35); background: radial-gradient(ellipse at 38% 100%, rgba(140, 98, 86, .7), transparent 22%), radial-gradient(ellipse at 18% 100%, rgba(92, 84, 92, .8), transparent 12%), radial-gradient(ellipse at 10% 100%, rgba(130, 90, 86, .7), transparent 14%), linear-gradient(90deg, #776c6c, #7b6b69 20%, #716b6d 32%, #82706b 50%, #7a6866 68%, #83706b 90%, #7f6966); }
  .cell { position: relative; width: 97.100px; flex: none; }
  .app { margin: 9px 0 0 .5px; overflow: visible; }
  .cell i { position: absolute; left: 44px; top: 110px; width: 8px; height: 8px; border-radius: 50%; background: #050505; }
  .cell em { position: absolute; left: 62px; top: 12px; width: 34px; height: 34px; border-radius: 50%; background: #f5403d; color: #fff; font: 23px/34px "Liberation Sans", sans-serif; text-align: center; letter-spacing: -1px; }
  .sep { display: flex; flex: none; width: 43px; height: 90px; padding: 32px 0 0 21px; }
  .sep::before { content: ""; width: 2px; height: 58px; background: #4e3e3c; }
  .sep.long { width: 45.500px; height: 110px; padding: 16px 0 0 23px; }
  .sep.long::before { height: 90px; }
</style>
